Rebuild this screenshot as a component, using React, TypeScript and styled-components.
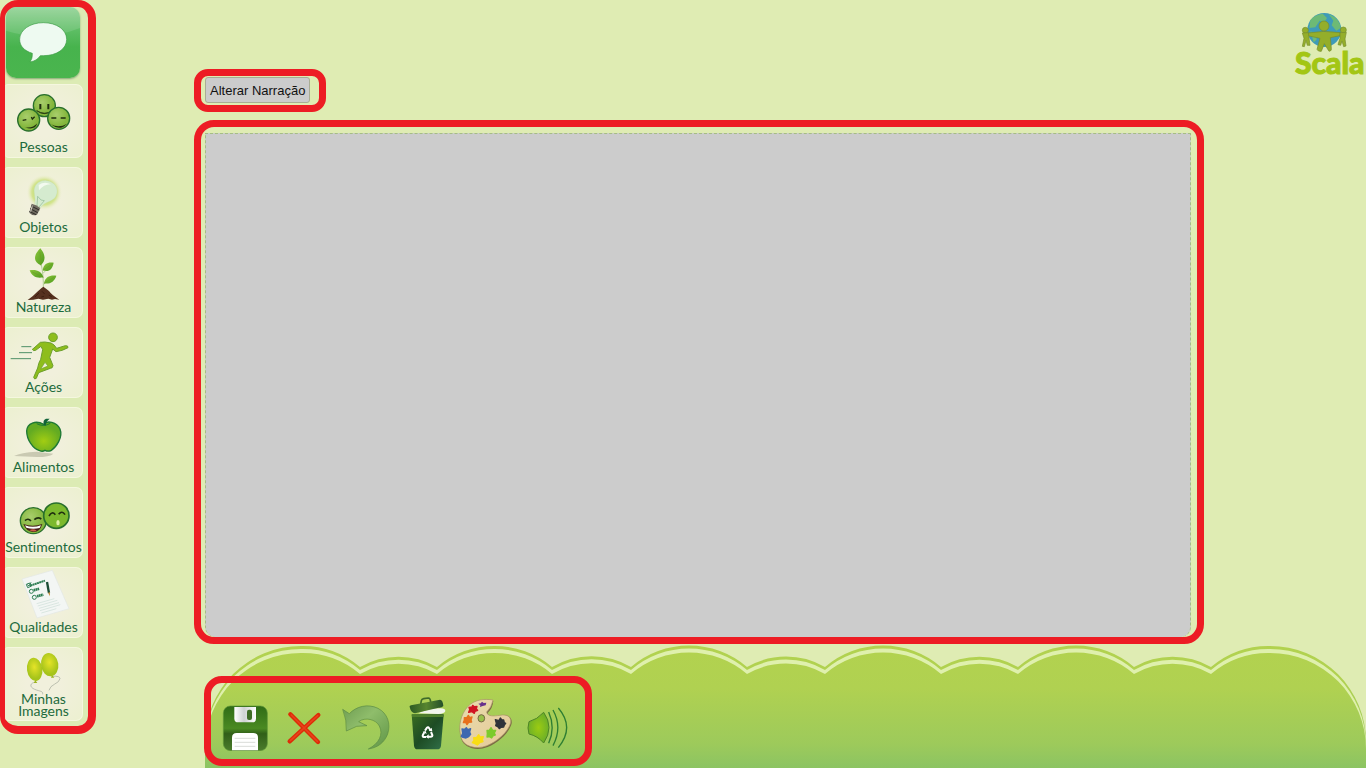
import React from 'react';
import styled, { createGlobalStyle } from 'styled-components';

const red = '#ed1c24';

const GlobalStyle = createGlobalStyle`
  *, *::before, *::after { box-sizing: border-box; }
  body { margin: 0; background: #dfecb3; font-family: "Liberation Sans", Arial, sans-serif; }
  button { font: inherit; color: inherit; cursor: pointer; }
`;

const Page = styled.div`
  display: flex;
  align-items: flex-start;
  min-height: 100vh;
  overflow: hidden;
`;

const Sidebar = styled.nav`
  flex: none;
  width: 96px;
  padding-bottom: 5px;
  border: solid ${red};
  border-width: 7px 8px 8px 5px;
  border-radius: 18px;
  background: #dcebb4;
  display: flex;
  flex-direction: column;
`;

const BalloonButton = styled.button`
  width: 74px;
  height: 71px;
  margin: 0 0 6px 1px;
  padding: 0;
  border: 0;
  border-radius: 10px;
  background: linear-gradient(#8fd092 0, #5cbd63 24px, #47b34d 40px, #4ab54e 100%);
  box-shadow: 0 1px 2px #86a878;
  overflow: hidden;
`;

const BalloonPicture = styled.svg`
  display: block;
  width: 74px;
  height: 71px;
`;

const CategoryList = styled.ul`
  list-style: none;
  margin: 0;
  padding: 0;
  display: flex;
  flex-direction: column;
  gap: 9px;
`;

const CategoryButton = styled.button<{ $tall?: boolean }>`
  display: flex;
  flex-direction: column;
  align-items: center;
  width: 78px;
  height: ${(p) => (p.$tall ? 74 : 71)}px;
  padding: 0;
  border: 1px solid #f5f7df;
  border-left: 0;
  border-radius: 3px 7px 7px 4px;
  background: radial-gradient(#f1f0dc 30%, #ecf0d0 100%);
`;

const Picture = styled.svg<{ $h: number }>`
  display: block;
  flex: none;
  width: 78px;
  height: ${(p) => p.$h}px;
  margin-top: -1px;
  overflow: visible;
`;

const Label = styled.span<{ $tight?: boolean }>`
  font-family: Lato, "Liberation Sans", sans-serif;
  font-size: 14px;
  font-variant-ligatures: none;
  line-height: ${(p) => (p.$tight ? 12 : 20)}px;
  color: #1d6b3c;
  text-align: center;
  white-space: pre-line;
`;

const Main = styled.main`
  flex: 1;
  min-width: 0;
  min-height: 100vh;
  padding-left: 98px;
  display: flex;
  flex-direction: column;
`;

const Header = styled.header`
  display: flex;
  justify-content: space-between;
  align-items: flex-start;
`;

const NarrationFrame = styled.div`
  margin-top: 69px;
  padding: 1px 9px 2px 4px;
  border: 7px solid ${red};
  border-radius: 14px;
`;

const NarrationButton = styled.button`
  display: block;
  height: 26px;
  padding: 0 4px;
  border: 1px solid #a9ad94;
  border-radius: 3px;
  background: #cccccc;
  color: #111;
  font-size: 13px;
  white-space: nowrap;
`;

const Logo = styled.a`
  flex: none;
  width: 71px;
  margin-top: 10px;
  color: #a3c614;
  text-decoration: none;
`;

const Globe = styled.svg`
  display: block;
  width: 71px;
  height: 42px;
`;

const LogoName = styled.span`
  display: block;
  font-family: Lato, sans-serif;
  font-weight: 900;
  font-size: 30px;
  line-height: 28px;
  margin-top: -4px;
  -webkit-text-stroke: 1px #a3c614;
`;

const CanvasFrame = styled.section`
  flex: 1;
  display: flex;
  margin: 8px 162px 0 0;
  padding: 6px 6px 0 4px;
  border: 7px solid ${red};
  border-radius: 20px;
`;

const Canvas = styled.div`
  flex: 1;
  min-height: 200px;
  border: 1px dashed #a5bd84;
  border-bottom: 0;
  border-radius: 0 0 10px 10px;
  background: #cccccc;
`;

const Footer = styled.footer`
  position: relative;
  display: flex;
  align-items: flex-start;
  margin-left: 10px;
  padding: 32px 0 2px;
`;

const Hills = styled.svg`
  position: absolute;
  inset: 0;
  width: 100%;
  height: 100%;
`;

const Toolbar = styled.div`
  position: relative;
  display: flex;
  gap: 6px;
  padding: 14px 12px 8px 8px;
  border: 7px solid ${red};
  border-radius: 18px;
`;

const ToolButton = styled.button`
  width: 54px;
  height: 54px;
  padding: 0;
  border: 0;
  background: none;
`;

const ToolPicture = styled.svg`
  display: block;
  width: 54px;
  height: 54px;
`;

const Balloon = () => (
  <BalloonPicture viewBox="18 21 222 213" aria-hidden="true">
    <path d="M18 21H240V84Q130 128 18 92Z" fill="#fff" opacity=".12" />
    <path d="M130 68C170 68 200 89 200 118S170 167 130 167L121 167Q110 183 90 186Q98 176 97 160C72 152 59 138 59 118C59 90 90 68 130 68Z" fill="#eefaf1" stroke="#3d9c46" strokeWidth="2" />
  </BalloonPicture>
);

const Face = ({ x, y, r = 33 }: { x: number; y: number; r?: number }) => (
  <circle cx={x} cy={y} r={r} fill="url(#face)" stroke="#286f2c" strokeWidth="4" />
);

const People = () => (
  <>
    <Face x={133} y={317} />
    <path d="M121 312V328M145 312V328" stroke="#20300f" strokeWidth="6" />
    <path d="M110 332Q133 350 156 332Q135 347 110 332Z" fill="#20300f" stroke="#20300f" strokeWidth="2" />
    <Face x={86} y={360} />
    <path d="M68 361l11-2M94 351l3 6 7-7" stroke="#20300f" strokeWidth="4" fill="none" />
    <path d="M75 382Q98 386 112 370Q104 393 75 382Z" fill="#20300f" />
    <Face x={176} y={355} />
    <path d="M154 354h15M182 354h15" stroke="#20300f" strokeWidth="5" />
    <path d="M153 373Q177 385 201 371Q179 395 153 373Z" fill="#20300f" />
  </>
);

const Bulb = () => (
  <>
    <circle cx="133" cy="97" r="54" fill="url(#glow)" />
    <path d="M104 133Q107 120 103 100C99 75 117 60 139 62C165 64 178 87 168 108C160 126 136 122 121 144Z" fill="#d5ebcf" stroke="#c6dfb4" strokeWidth="1" />
    <path d="M116 75Q133 63 153 73Q132 72 117 91Z" fill="#f3faef" />
    <path d="M111 137L113 109L123 120L133 122L117 141" fill="none" stroke="#8eb894" strokeWidth="2" />
    <path d="M95 131Q108 134 121 144L111 164Q99 170 88 158Z" fill="#6e6a60" />
    <path d="M93 138l25 12M91 146l22 12M88 154l20 10" stroke="#2f2d28" strokeWidth="3" />
    <path d="M97 137l-5 18" stroke="#d6d2c6" strokeWidth="3" />
  </>
);

const Plant = () => (
  <>
    <path d="M123 310Q131 343 130 388M129 340l8-8M131 352l-10-8M131 374l8-10" fill="none" stroke="#b4cf95" strokeWidth="3" />
    <path d="M121 265C136 283 139 302 122 316C99 305 100 285 121 265Z" fill="url(#leaf)" />
    <path d="M128 331C130 311 145 305 161 308C157 329 146 337 128 331Z" fill="url(#leaf)" />
    <path d="M89 331C107 327 125 333 130 352C111 356 95 350 89 331Z" fill="url(#leaf)" />
    <path d="M132 370C135 350 152 344 169 347C163 366 149 373 132 370Z" fill="url(#leaf)" />
    <path d="M120 276Q123 292 122 316M157 311l-28 20M95 335l35 17M164 350l-31 20" fill="none" stroke="#6c9e22" strokeWidth="2" />
    <path d="M83 420Q102 406 112 395Q125 383 130 380Q138 385 147 393Q153 403 178 419L165 417L156 419L145 416L129 419L115 416L100 419Z" fill="#55301f" />
    <path d="M105 411l12-12M126 394l8 8M146 405l9 5M124 411l8-2" stroke="#3d1e10" strokeWidth="3" />
  </>
);

const Runner = () => (
  <>
    <path d="M64 80H94M57 98H96M32 116H93" stroke="#4f9068" strokeWidth="3" />
    <g fill="#8ebd1c" stroke="#6c9f2c" strokeWidth="3" strokeLinejoin="round">
      <circle cx="159" cy="52" r="13" />
      <path d="M102 84L121 67Q132 64 153 69Q163 73 170 85L196 77Q205 76 204 83Q187 93 168 95L158 87L149 112L159 137Q158 145 151 145L116 158L109 175Q103 180 101 172L113 144Q115 129 122 118L128 89L123 79L107 91Q99 94 97 88Z" />
      <path d="M122 147l13-20 9 11Z" fill="#f0f0d9" strokeWidth="2" />
    </g>
  </>
);

const Apple = () => (
  <>
    <path d="M42 408Q62 397 110 395L160 401Q150 411 110 411Z" fill="#c9c9b2" />
    <path d="M131 313C141 300 170 306 180 327C190 352 168 382 154 391Q145 396 135 391Q128 396 119 392C99 387 80 359 80 333C81 309 108 300 131 313Z" fill="url(#apple)" stroke="#1e7935" strokeWidth="4" />
    <path d="M110 311Q131 322 151 310" fill="none" stroke="#1e7935" strokeWidth="3" />
    <path d="M132 315Q127 300 138 296L149 296Q138 304 137 317Z" fill="#116338" />
  </>
);

const Feelings = () => (
  <>
    <Face x={100} y={122} r={39} />
    <path d="M75 122q9-9 18 1M103 119q10-10 21-2" fill="none" stroke="#20300f" strokeWidth="5" />
    <path d="M70 132Q98 143 127 132Q119 158 99 156Q79 155 70 132Z" fill="#452118" />
    <path d="M75 136Q98 145 123 136L119 144Q98 149 79 143Z" fill="#fff" />
    <path d="M88 151q12-7 22 1-10 5-22-1Z" fill="#c95c49" />
    <circle cx="169" cy="107" r="38" fill="#7cb92d" stroke="#286f2c" strokeWidth="5" />
    <path d="M147 108q9-16 19-4M176 103q10-13 19 1" fill="none" stroke="#20300f" strokeWidth="5" />
    <ellipse cx="174" cy="128" rx="5" ry="8" fill="#def0a5" />
  </>
);

const Checklist = () => (
  <>
    <path d="M66 297L157 271L207 386L111 414Z" fill="#f3f6f4" stroke="#e2e7e4" strokeWidth="2" />
    <path d="M91 317l44-15" stroke="#2d7d52" strokeWidth="6" strokeDasharray="6 1" />
    <path d="M101 331l17-5M111 349l19-5" stroke="#2d7d52" strokeWidth="8" strokeDasharray="5 1" />
    <g fill="none" stroke="#2d7d52" strokeWidth="3">
      <path d="M79 313l10-4 4 10-10 4ZM82 314l5 4 6-11" />
      <circle cx="94" cy="334" r="6" /><circle cx="103" cy="352" r="6" />
    </g>
    <path d="M141 306L147 339" stroke="#1c4d35" strokeWidth="7" />
    <path d="M144 338l6-1 0 12Z" fill="#c59045" />
    <path d="M110 371l53-15M113 378l59-17M117 385l60-17M120 392l61-18M124 399l45-13" stroke="#cbded6" strokeWidth="2" />
  </>
);

const Balloons = () => (
  <>
    <path d="M106 142C90 143 87 156 104 163S129 167 128 178M157 124Q180 122 180 131Q178 141 163 148Q151 153 147 166" fill="none" stroke="#a2a799" strokeWidth="2" />
    <ellipse cx="104" cy="103" rx="23" ry="35" transform="rotate(-8 104 103)" fill="url(#balloon)" />
    <path d="M106 136l-5 8h11ZM156 120l-3 8h10Z" fill="#9db522" />
    <ellipse cx="149" cy="89" rx="26" ry="35" transform="rotate(-8 149 89)" fill="url(#balloon)" />
  </>
);

const categories = [
  { name: 'Pessoas', box: '15 252 234 159', h: 53, tall: true, art: <People /> },
  { name: 'Objetos', box: '15 21 234 150', h: 50, art: <Bulb /> },
  { name: 'Natureza', box: '15 261 234 150', h: 50, art: <Plant /> },
  { name: 'Ações', box: '15 21 234 150', h: 50, art: <Runner /> },
  { name: 'Alimentos', box: '15 261 234 150', h: 50, art: <Apple /> },
  { name: 'Sentimentos', box: '15 21 234 150', h: 50, art: <Feelings /> },
  { name: 'Qualidades', box: '15 261 234 150', h: 50, art: <Checklist /> },
  { name: 'Minhas\nImagens', box: '15 36 234 138', h: 46, tall: true, tight: true, art: <Balloons /> },
];

const Save = () => (
  <>
    <rect x="85" y="228" width="132" height="134" rx="21" fill="url(#disk)" stroke="#5f9638" strokeWidth="2" />
    <path d="M118 231H183V266Q183 277 172 277H130Q118 277 118 266Z" fill="url(#metal)" />
    <rect x="156" y="239" width="15" height="31" rx="6" fill="#3f6c25" />
    <path d="M111 361V323Q111 309 125 309H175Q189 309 189 323V361Z" fill="#fff" />
    <path d="M119 325h62M119 337h62M119 349h62" stroke="#c7cac4" strokeWidth="2" />
  </>
);

const Close = () => (
  <>
    <path d="M286 253L369 336M370 255L284 334" stroke="#dd2c08" strokeWidth="13" strokeLinecap="round" />
    <path d="M289 255L367 334M368 257L286 332" stroke="#e8421a" strokeWidth="5" strokeLinecap="round" />
  </>
);

const Undo = () => (
  <path d="M443 238L463 251C484 229 518 220 549 235C578 250 588 282 578 312C568 338 548 353 520 357C552 341 566 313 553 288C543 268 510 260 491 275L516 287L485 289L454 303Q456 270 443 238Z" fill="url(#arrow)" stroke="#5a8b42" strokeWidth="2" strokeLinejoin="round" />
);

const Trash = () => (
  <>
    <path d="M70 250Q100 235 137 235Q151 235 151 243Q149 251 130 252Z" fill="#f1f5ed" />
    <path d="M77 223L79 212Q80 207 86 206L100 204Q106 204 107 216" fill="none" stroke="#3d6b2a" strokeWidth="5" />
    <path d="M44 231Q42 228 48 226L135 209Q144 210 145 228Q140 234 131 233L60 250Q48 249 44 231Z" fill="url(#lid)" />
    <path d="M50 253H146L138 347Q137 358 126 358H68Q58 358 57 347Z" fill="url(#bin)" />
    <path d="M50 254H146L145 261H51Z" fill="#4e7e2c" />
    <path d="M90 302l6-9q3-3 6 1l4 6M108 306l4 9q1 5-5 5h-9M93 321h-6q-6-1-3-7l4-7" fill="none" stroke="#fff" strokeWidth="6" />
    <path d="M101 303l11 1-2-11ZM101 313v13l-9-6ZM83 305l9-2 3 9Z" fill="#fff" />
  </>
);

const Palette = () => (
  <>
    <path d="M295 213Q293 235 278 249C281 262 300 260 317 257C339 253 352 261 350 280C344 306 312 337 278 351C242 365 207 352 199 328C188 291 198 256 219 232C241 208 273 205 295 213Z" fill="#7b6a45" />
    <path d="M294 210Q290 232 275 246C278 261 297 258 315 256C337 252 349 260 347 278C341 303 310 333 276 347C242 360 207 349 199 325C188 289 197 254 218 230C240 207 271 206 294 210Z" fill="url(#wood)" stroke="#a99665" strokeWidth="2" />
    <ellipse cx="259" cy="265" rx="10" ry="11" fill="#99c04b" stroke="#776844" strokeWidth="3" />
    <g strokeWidth="4" strokeLinejoin="round">
      <path d="M222 232l9-1 2-5 5 4 8-1-2 8 4 4-8 3-2 6-7-5-10 2 3-8Z" fill="#d01322" stroke="#d01322" />
      <path d="M250 221l7-1 4-5 5 4 8-1-2 8-9 2-8 3 1-5Z" fill="#68308d" />
      <path d="M208 263l8-1 4-6 4 7 7-2-3 9 2 6-9 1-5 7-4-7-7 1 3-8Z" fill="#e8701c" stroke="#e8701c" />
      <path d="M201 297l8 1 5-5 4 6 9-3-3 10 3 7-6 7-8 4-9-2-5-3 4-9Z" fill="#3e68b0" stroke="#3e68b0" />
      <path d="M236 323l9-1 6-8 4 7 10-1-3 9 2 6-10 3-7 7-7-4-8-3 5-7Z" fill="#f9dd15" stroke="#f9dd15" />
      <path d="M276 301l7 0 5-8 5 8 9 0-4 8 3 6-7 3-4 6-7-4-7 1 1-10Z" fill="#7ccb2c" stroke="#7ccb2c" />
      <path d="M301 269l11 3 4-8 4 5 6 1 2 8 4 2-4 5-2 6-8 1-5 4-5-6-6-3 2-7Z" fill="#30343a" stroke="#30343a" />
    </g>
  </>
);

const Speaker = () => (
  <>
    <path d="M402 275Q426 269 446 247Q478 292 446 339Q428 318 402 312Q396 294 402 275Z" fill="url(#speaker)" stroke="#4d8426" strokeWidth="3" />
    <path d="M461 246Q482 293 461 340M474 240Q503 292 474 347M490 234Q540 292 490 353" fill="none" stroke="#2e7e32" strokeWidth="4" />
  </>
);

const tools = [
  { name: 'Salvar', x: 72, art: <Save /> },
  { name: 'Fechar', x: 252, art: <Close /> },
  { name: 'Desfazer', x: 432, art: <Undo /> },
  { name: 'Lixeira', x: 12, art: <Trash /> },
  { name: 'Cores', x: 192, art: <Palette /> },
  { name: 'Som', x: 372, art: <Speaker /> },
];

const hillTop =
  'M1 123V98A96 96 0 0 1 97 2A89 89 0 0 1 156 23A78 78 0 0 1 233 23A89 89 0 0 1 348 23A78 78 0 0 1 427 23A89 89 0 0 1 543 23A78 78 0 0 1 621 23A89 89 0 0 1 737 23A78 78 0 0 1 814 23A89 89 0 0 1 930 23A78 78 0 0 1 1007 23A89 89 0 0 1 1066 2A96 96 0 0 1 1162 98V140H1Z';

const Gradients = () => (
  <svg width="0" height="0" aria-hidden="true" display="block">
    <defs>
      <radialGradient id="face" cx=".4" cy=".35"><stop offset="0" stopColor="#a8ce6c" /><stop offset="1" stopColor="#84b63c" /></radialGradient>
      <radialGradient id="glow"><stop offset=".4" stopColor="#bfdc6c" /><stop offset=".7" stopColor="#d3e48f" /><stop offset="1" stopColor="#f0f0d9" stopOpacity="0" /></radialGradient>
      <linearGradient id="leaf" x2="1" y2="1"><stop offset="0" stopColor="#8cc63a" /><stop offset="1" stopColor="#4c9a1e" /></linearGradient>
      <radialGradient id="apple" cx=".5" cy=".65"><stop offset="0" stopColor="#a2cd12" /><stop offset="1" stopColor="#63ab22" /></radialGradient>
      <radialGradient id="balloon" cx=".5" cy=".4"><stop offset="0" stopColor="#e5e428" /><stop offset="1" stopColor="#a6c41b" /></radialGradient>
      <linearGradient id="disk" x2="0" y2="1"><stop offset="0" stopColor="#2f6b16" /><stop offset=".5" stopColor="#4a8a22" /><stop offset=".62" stopColor="#315f18" /><stop offset="1" stopColor="#4b7c2c" /></linearGradient>
      <linearGradient id="metal"><stop offset="0" stopColor="#fff" /><stop offset=".45" stopColor="#cfd2d2" /><stop offset="1" stopColor="#fff" /></linearGradient>
      <linearGradient id="arrow" x2="1" y2="1"><stop offset="0" stopColor="#6e9c52" /><stop offset=".4" stopColor="#8fbd6b" /><stop offset="1" stopColor="#5f9546" /></linearGradient>
      <linearGradient id="lid"><stop offset="0" stopColor="#2c5a24" /><stop offset=".5" stopColor="#57852f" /><stop offset="1" stopColor="#244f2a" /></linearGradient>
      <linearGradient id="bin" y2="1"><stop offset="0" stopColor="#3a6d22" /><stop offset=".5" stopColor="#1d4c24" /><stop offset="1" stopColor="#31704a" /></linearGradient>
      <linearGradient id="wood" x2="1" y2="1"><stop offset="0" stopColor="#e8dcae" /><stop offset="1" stopColor="#e6c997" /></linearGradient>
      <radialGradient id="speaker"><stop offset="0" stopColor="#9bcb12" /><stop offset="1" stopColor="#6db028" /></radialGradient>
    </defs>
  </svg>
);

export default function App() {
  return (
    <>
      <GlobalStyle />
      <Page>
        <Sidebar aria-label="Categorias">
          <BalloonButton aria-label="Balões"><Balloon /></BalloonButton>
          <CategoryList>
            {categories.map((c) => (
              <li key={c.name}>
                <CategoryButton $tall={c.tall}>
                  <Picture $h={c.h} viewBox={c.box} aria-hidden="true">{c.art}</Picture>
                  <Label $tight={c.tight}>{c.name}</Label>
                </CategoryButton>
              </li>
            ))}
          </CategoryList>
        </Sidebar>
        <Main>
          <Header>
            <NarrationFrame>
              <NarrationButton>Alterar Narração</NarrationButton>
            </NarrationFrame>
            <Logo href="#">
              <Globe viewBox="75 30 213 126" aria-hidden="true">
                <circle cx="163" cy="90" r="51" fill="#3e9bb9" />
                <path d="M121 60Q136 43 158 41L171 54L162 68L149 62L136 82L118 84ZM176 42Q210 56 212 84L199 92L185 76L190 62ZM121 94l16 5 3 20-9 8Z" fill="#6dba76" />
                <g fill="#94ae2a" stroke="#768d2c" strokeWidth="2">
                  <path d="M113 99Q160 90 211 98L210 107L181 113L184 145Q186 153 177 154L163 131L154 154Q143 155 141 148L150 115L113 107Z" />
                  <circle cx="162" cy="78" r="15" />
                  <circle cx="106" cy="91" r="9" />
                  <circle cx="220" cy="90" r="9" />
                  <path d="M97 99L115 98L120 136L112 136L108 121L103 140L97 139L102 115Z" />
                  <path d="M210 98L229 97L225 117L228 138L221 140L216 123L212 136L204 134L210 115Z" />
                </g>
              </Globe>
              <LogoName>Scala</LogoName>
            </Logo>
          </Header>
          <CanvasFrame aria-label="Área de criação">
            <Canvas />
          </CanvasFrame>
          <Footer>
            <Hills viewBox="0 0 1162 124" preserveAspectRatio="none" aria-hidden="true">
              <defs>
                <linearGradient id="hill" gradientUnits="userSpaceOnUse" x1="0" y1="0" x2="0" y2="124">
                  <stop offset="0" stopColor="#b2d24f" />
                  <stop offset=".3" stopColor="#b0d151" />
                  <stop offset=".75" stopColor="#9dca5b" />
                  <stop offset="1" stopColor="#86c264" />
                </linearGradient>
              </defs>
              <path d={hillTop} fill="url(#hill)" />
              <path d={hillTop} transform="translate(0 3)" fill="#dff0ad" />
              <path d={hillTop} transform="translate(0 7)" fill="url(#hill)" />
            </Hills>
            <Toolbar role="toolbar" aria-label="Ferramentas">
              {tools.map((t) => (
                <ToolButton key={t.name} aria-label={t.name}>
                  <ToolPicture viewBox={`${t.x} 201 162 162`} aria-hidden="true">{t.art}</ToolPicture>
                </ToolButton>
              ))}
            </Toolbar>
          </Footer>
        </Main>
      </Page>
      <Gradients />
    </>
  );
}
